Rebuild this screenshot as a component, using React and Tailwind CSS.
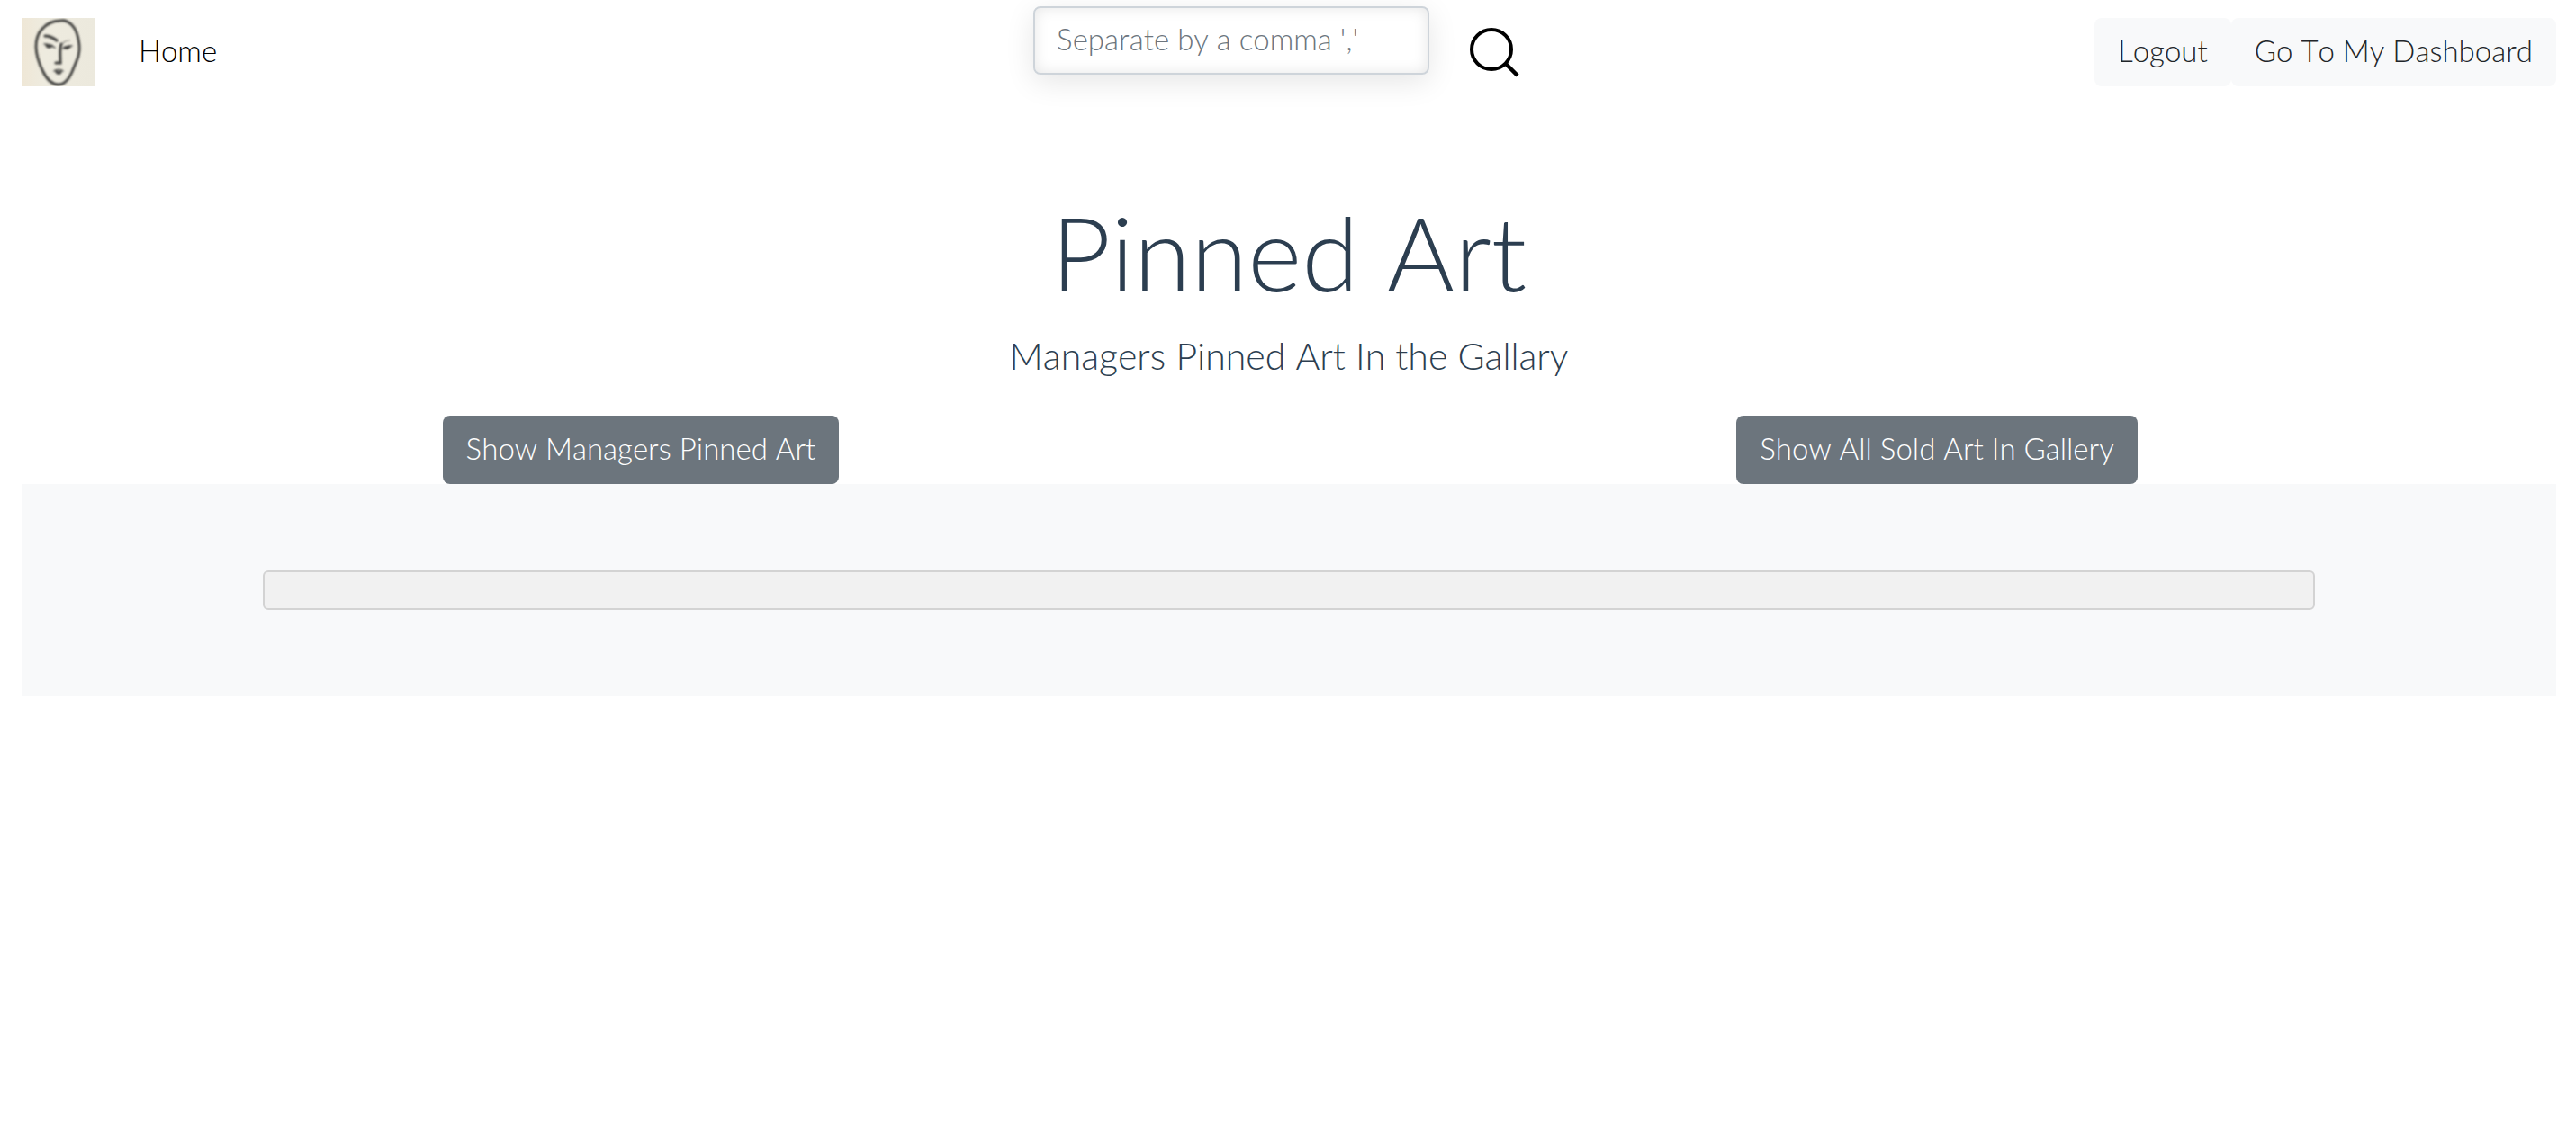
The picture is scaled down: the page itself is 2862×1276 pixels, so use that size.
function FaceLogo() {
  return (
    <svg viewBox="0 0 82 76" className="h-[76px] w-[82px]" role="img" aria-label="Gallery logo">
      <defs>
        <linearGradient id="paper" x1="0" x2="1" y1="0" y2="0">
          <stop offset="0" stopColor="#efe7d6" />
          <stop offset="0.3" stopColor="#eeebdf" />
          <stop offset="1" stopColor="#ece9dd" />
        </linearGradient>
        <filter id="ink">
          <feGaussianBlur stdDeviation="0.8" />
        </filter>
      </defs>
      <rect width="82" height="76" fill="url(#paper)" />
      <g fill="none" stroke="#3f3f3e" strokeLinecap="round" strokeLinejoin="round" filter="url(#ink)">
        <path d="M43 3C35 3 28 6 22 13C17 19 16 26 16 32C16 41 19 50 24 60C29 70 35 74 41 74C48 74 54 66 58 55C62 46 65 40 64 30C63 20 61 13 56 8C52 4 48 2 43 3Z" strokeWidth="2.8" />
        <path d="M26 20C31 20 35 22 39 25" strokeWidth="3.2" />
        <path d="M25 29C28 29 33 30 37 33" strokeWidth="1.4" />
        <path d="M28 31C30 33 32 32 33 31" strokeWidth="3" />
        <path d="M53 25C49 25 46 27 44 31" strokeWidth="1.2" opacity="0.6" />
        <path d="M44 29C42 33 43 42 43 50" strokeWidth="3" />
        <path d="M43 50H38" strokeWidth="3.2" />
        <path d="M46 34C49 31 52 31 56 31" strokeWidth="1.6" />
        <path d="M48 33C50 34 52 33 53 32" strokeWidth="3" />
        <path d="M36 59C38 57 44 57 46 59" strokeWidth="1.6" />
        <path d="M39 60C40 62 43 61 43 60" strokeWidth="3.2" />
      </g>
    </svg>
  );
}

function SearchIcon() {
  return (
    <svg viewBox="0 0 56 56" className="h-14 w-14" fill="none" stroke="#000" strokeWidth="4" aria-hidden="true">
      <circle cx="25" cy="25" r="22" />
      <path d="M40 40L54 54" strokeWidth="4.5" />
    </svg>
  );
}

function GalleryButton({ children }) {
  return (
    <button type="button" className="h-[76px] rounded-lg bg-[#6c757d] px-[26px] pb-1 text-white">
      {children}
    </button>
  );
}

function NavButton({ children }) {
  return (
    <button type="button" className="h-[76px] rounded-lg bg-[#f8f9fa] px-[26px] pb-1">
      {children}
    </button>
  );
}

export default function App() {
  return (
    <div className="bg-white pr-[22px] pl-6 font-['Lato',sans-serif] text-[33px] leading-[48px] font-light text-[#212529] [font-kerning:none]">
      <nav className="grid h-[116px] grid-cols-[1fr_auto_1fr]">
        <div className="flex items-center gap-12">
          <a href="#logo">
            <FaceLogo />
          </a>
          <a href="#home" className="pb-1 text-black">Home</a>
        </div>
        <form className="flex items-center gap-[44px] pr-7">
          <input
            type="text"
            aria-label="Search"
            placeholder="Separate by a comma ','"
            className="mt-[7px] h-[76px] w-[440px] self-start rounded-lg border-2 border-[#ced4da] bg-white px-6 pb-1 shadow-[inset_0_0_16px_rgba(0,0,0,0.1),0_8px_32px_rgba(0,0,0,0.1)] placeholder:text-[#6c757d]"
          />
          <button type="submit" aria-label="Submit search">
            <SearchIcon />
          </button>
        </form>
        <div className="flex items-center justify-end">
          <NavButton>Logout</NavButton>
          <NavButton>Go To My Dashboard</NavButton>
        </div>
      </nav>

      <header className="pt-24 text-center text-[#2c3e50]">
        <h1 className="text-[115px] leading-[134px]">Pinned Art</h1>
        <p className="mt-5 text-[41px] leading-[60px]">Managers Pinned Art In the Gallary</p>
      </header>

      <div className="mt-9 grid grid-cols-2 gap-16">
        <div className="flex justify-center">
          <GalleryButton>Show Managers Pinned Art</GalleryButton>
        </div>
        <div className="flex justify-center">
          <GalleryButton>Show All Sold Art In Gallery</GalleryButton>
        </div>
      </div>

      <main className="bg-[#f8f9fa] py-24">
        <div className="mx-auto h-11 max-w-[2280px] rounded-md border-2 border-[#d3d3d3] bg-[#f1f1f1]" />
      </main>
    </div>
  );
}
